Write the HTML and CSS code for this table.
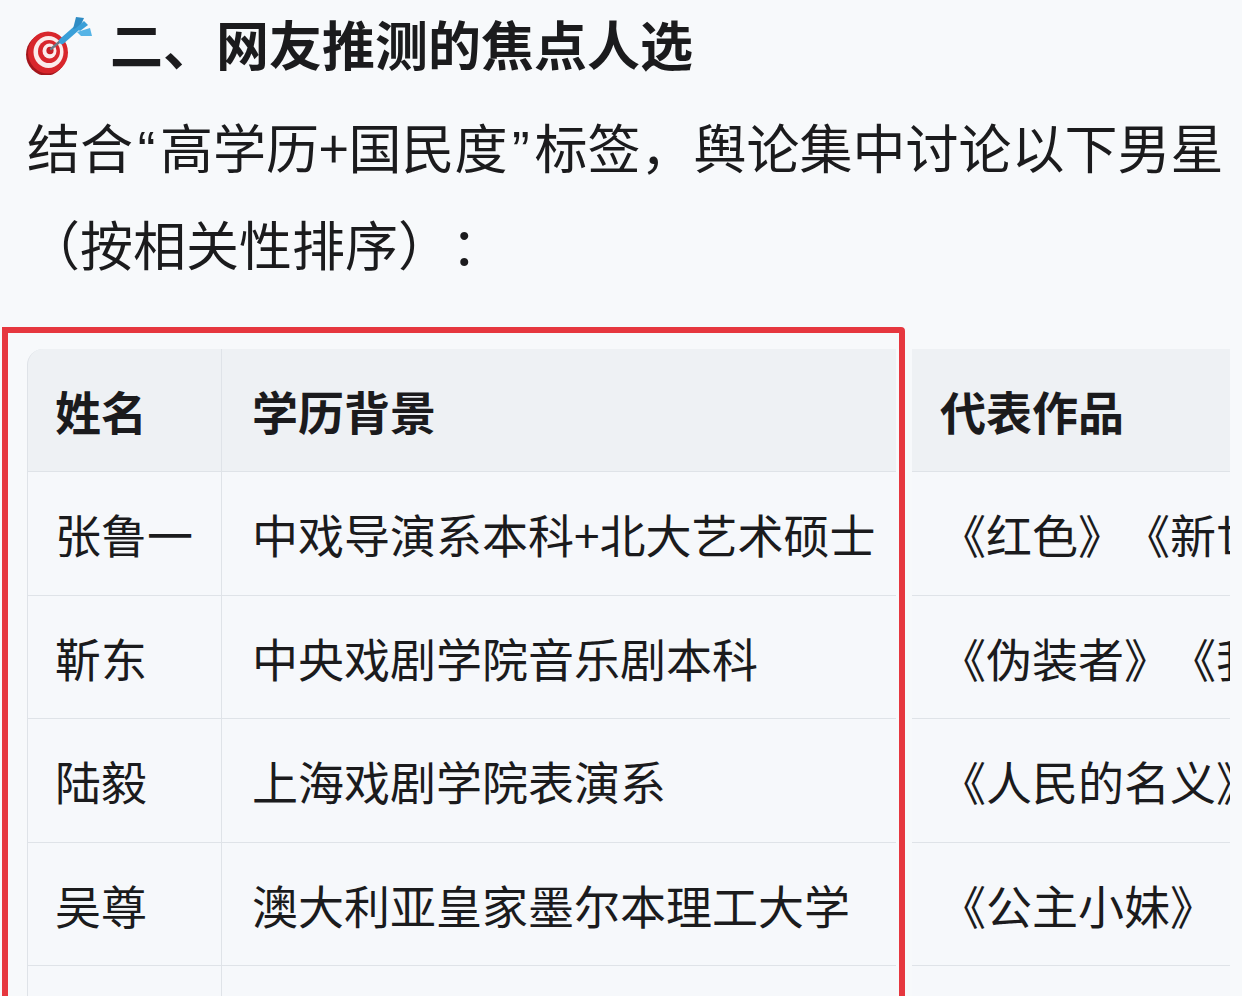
FILE: index.html
```html
<!DOCTYPE html>
<html lang="zh-CN">
<head>
<meta charset="utf-8">
<title>二、网友推测的焦点人选</title>
<link rel="stylesheet" href="styles.css">
</head>
<body>
<div class="page">
  <h2 class="heading">
    <svg class="target" viewBox="0 0 72 62" width="72" height="62" aria-hidden="true">
      <ellipse cx="22" cy="41.5" rx="20" ry="21" fill="#a3161c"/>
      <ellipse cx="24" cy="39.5" rx="20" ry="21" fill="#d8262c"/>
      <ellipse cx="24.5" cy="39" rx="15" ry="16" fill="#fbecec"/>
      <ellipse cx="25" cy="38.5" rx="11" ry="11.5" fill="#d8262c"/>
      <ellipse cx="25.5" cy="38" rx="7" ry="7.5" fill="#fbecec"/>
      <ellipse cx="26" cy="37.5" rx="3.6" ry="3.8" fill="#c81e25"/>
      <path d="M27 36 L40 25" stroke="#6b7a86" stroke-width="2.4" stroke-linecap="round"/>
      <path d="M38 28 L54 14" stroke="#3a9fd8" stroke-width="6" stroke-linecap="round"/>
      <path d="M49 16 L52 4 L60 5 L56 14 Z" fill="#2f8cc4"/>
      <path d="M53 19 L66 15 L68 23 L57 23 Z" fill="#56b4e6"/>
      <path d="M52 15 L60 8 L64 12 L56 18 Z" fill="#3a9fd8"/>
    </svg>
    <span>二、网友推测的焦点人选</span>
  </h2>
  <p class="lead">结合<span class="q">“</span>高学历+国民度<span class="q">”</span>标签，舆论集中讨论以下男星<br>（按相关性排序）：</p>

  <div class="tables">
    <table class="grid main">
      <colgroup><col class="c1"><col class="c2"></colgroup>
      <thead>
        <tr><th>姓名</th><th>学历背景</th></tr>
      </thead>
      <tbody>
        <tr><td>张鲁一</td><td>中戏导演系本科+北大艺术硕士</td></tr>
        <tr><td>靳东</td><td>中央戏剧学院音乐剧本科</td></tr>
        <tr><td>陆毅</td><td>上海戏剧学院表演系</td></tr>
        <tr><td>吴尊</td><td>澳大利亚皇家墨尔本理工大学</td></tr>
        <tr><td>&nbsp;</td><td>&nbsp;</td></tr>
      </tbody>
    </table>
    <div class="clip">
      <table class="grid side">
        <thead>
          <tr><th>代表作品</th></tr>
        </thead>
        <tbody>
          <tr><td>《红色》《新世界》</td></tr>
          <tr><td>《伪装者》《我的前半生》</td></tr>
          <tr><td>《人民的名义》</td></tr>
          <tr><td>《公主小妹》</td></tr>
          <tr><td>&nbsp;</td></tr>
        </tbody>
      </table>
    </div>
    <div class="mark"></div>
  </div>
</div>
</body>
</html>
```

FILE: styles.css
```css
html, body {
  margin: 0;
  padding: 0;
  background: #f7f9fb;
  overflow: hidden;
}

body {
  width: 1242px;
  height: 996px;
  font-family: "Noto Sans CJK SC", "Noto Sans", sans-serif;
  color: #1b1b1d;
  text-spacing-trim: space-all;
}

.page {
  padding-left: 27px;
}

.heading {
  display: flex;
  align-items: center;
  height: 90px;
  margin: 0;
  font-size: 53px;
  font-weight: 700;
  line-height: 90px;
  position: relative;
}

.target {
  display: block;
  margin-left: -3px;
  margin-right: 14px;
  margin-top: -2px;
}

.heading span {
  margin-top: -4px;
}

.lead {
  margin: 10px 0 0 0;
  font-size: 53px;
  line-height: 93px;
  font-weight: 400;
  white-space: nowrap;
}

.q {
  font-family: "Liberation Sans", sans-serif;
  display: inline-block;
  width: 27px;
  text-align: center;
}

.tables {
  position: relative;
  display: flex;
  align-items: flex-start;
  gap: 16px;
  margin-top: 59px;
}

.grid {
  border-collapse: separate;
  border-spacing: 0;
  font-size: 46px;
  line-height: 60px;
  table-layout: fixed;
}

.grid th,
.grid td {
  height: 122.5px;
  padding: 0 0 0 30px;
  text-align: left;
  vertical-align: middle;
  white-space: nowrap;
  border-bottom: 1px solid #dfe3e8;
}

.grid thead th {
  height: 122px;
  background: #eef1f4;
  font-weight: 700;
}

.grid td {
  background: #f6f8fb;
  font-weight: 400;
}

.main {
  width: 869px;
}

.main .c1 { width: 195px; }
.main .c2 { width: 674px; }

.main th:first-child,
.main td:first-child {
  padding-left: 27px;
  border-left: 1px solid #dfe3e8;
  border-right: 1px solid #dfe3e8;
}

.main thead th:first-child {
  border-top-left-radius: 16px;
}

.clip {
  width: 318px;
  overflow: hidden;
}

.side {
  width: 318px;
}

.side th,
.side td {
  padding-left: 28px;
}

.mark {
  position: absolute;
  left: -25px;
  top: -22px;
  width: 891px;
  height: 720px;
  border: 6px solid #e6373f;
  border-top-right-radius: 4px;
  pointer-events: none;
}
```
